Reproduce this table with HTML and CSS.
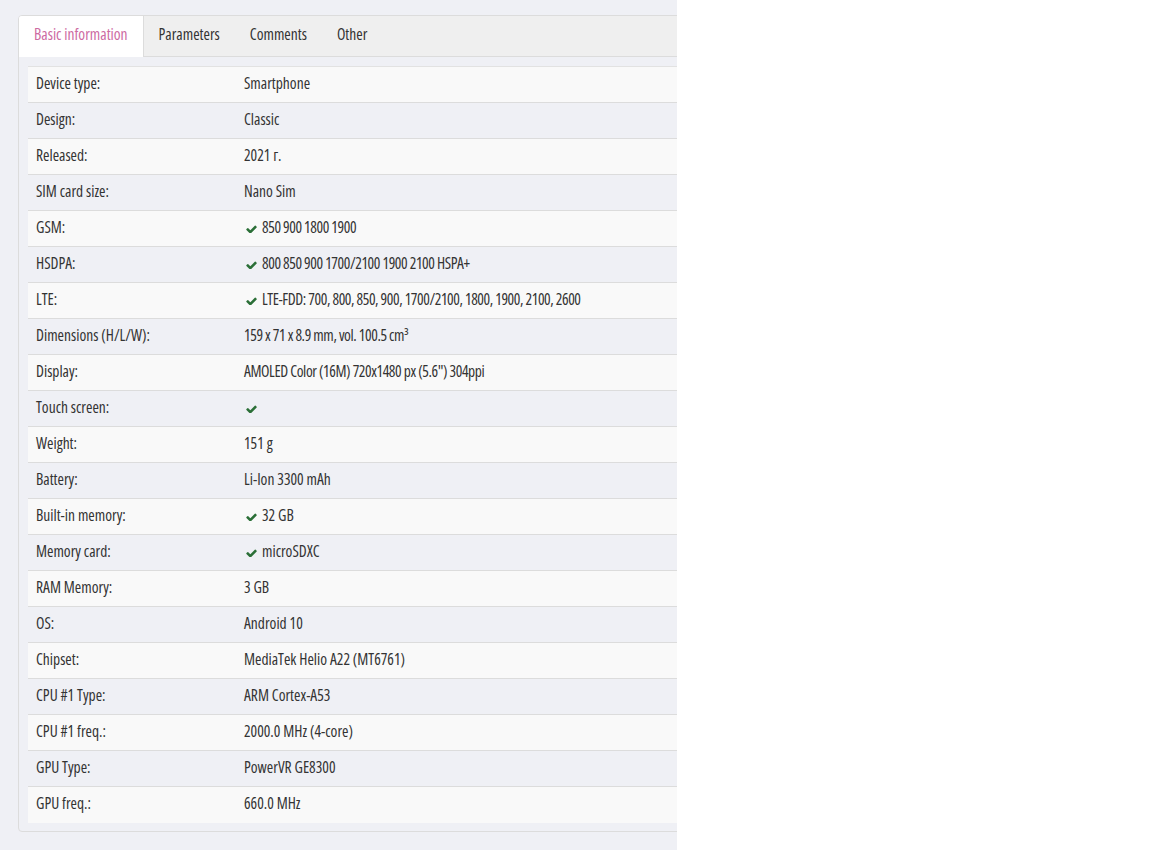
FILE: index.html
```html
<!DOCTYPE html>
<html lang="en">
<head>
    <meta charset="UTF-8">
    <title>Device specs</title>
    <link rel="stylesheet" href="styles.css">
</head>
<body>
    <div class="page">
        <div class="card">
            <div class="tabs">
                <div class="tab active">Basic information</div>
                <div class="tab">Parameters</div>
                <div class="tab">Comments</div>
                <div class="tab">Other</div>
            </div>

            <div class="tab-body">
                <table class="specs">
                    <tr><td>Device type:</td><td>Smartphone</td></tr>
                    <tr><td>Design:</td><td>Classic</td></tr>
                    <tr><td>Released:</td><td>2021 г.</td></tr>
                    <tr><td>SIM card size:</td><td>Nano Sim</td></tr>
                    <tr><td>GSM:</td><td><span class="yes"><svg viewBox="100 260 1575 1170"><path d="M1671 566q0 40-28 68l-724 724-136 136q-28 28-68 28t-68-28l-136-136-362-362q-28-28-28-68t28-68l136-136q28-28 68-28t68 28l294 295 656-657q28-28 68-28t68 28l136 136q28 28 28 68z"/></svg></span><span class="num">850 900 1800 1900</span></td></tr>
                    <tr><td>HSDPA:</td><td><span class="yes"><svg viewBox="100 260 1575 1170"><path d="M1671 566q0 40-28 68l-724 724-136 136q-28 28-68 28t-68-28l-136-136-362-362q-28-28-28-68t28-68l136-136q28-28 68-28t68 28l294 295 656-657q28-28 68-28t68 28l136 136q28 28 28 68z"/></svg></span><span class="num">800 850 900 1700/2100 1900 2100 HSPA+</span></td></tr>
                    <tr><td>LTE:</td><td><span class="yes"><svg viewBox="100 260 1575 1170"><path d="M1671 566q0 40-28 68l-724 724-136 136q-28 28-68 28t-68-28l-136-136-362-362q-28-28-28-68t28-68l136-136q28-28 68-28t68 28l294 295 656-657q28-28 68-28t68 28l136 136q28 28 28 68z"/></svg></span><span class="num">LTE-FDD: 700, 800, 850, 900, 1700/2100, 1800, 1900, 2100, 2600</span></td></tr>
                    <tr><td>Dimensions (H/L/W):</td><td><span class="num">159 x 71 x 8.9 mm, vol. 100.5 cm³</span></td></tr>
                    <tr><td>Display:</td><td><span class="num">AMOLED Color (16M) 720x1480 px (5.6") 304ppi</span></td></tr>
                    <tr><td>Touch screen:</td><td><span class="yes"><svg viewBox="100 260 1575 1170"><path d="M1671 566q0 40-28 68l-724 724-136 136q-28 28-68 28t-68-28l-136-136-362-362q-28-28-28-68t28-68l136-136q28-28 68-28t68 28l294 295 656-657q28-28 68-28t68 28l136 136q28 28 28 68z"/></svg></span></td></tr>
                    <tr><td>Weight:</td><td>151 g</td></tr>
                    <tr><td>Battery:</td><td>Li-Ion 3300 mAh</td></tr>
                    <tr><td>Built-in memory:</td><td><span class="yes"><svg viewBox="100 260 1575 1170"><path d="M1671 566q0 40-28 68l-724 724-136 136q-28 28-68 28t-68-28l-136-136-362-362q-28-28-28-68t28-68l136-136q28-28 68-28t68 28l294 295 656-657q28-28 68-28t68 28l136 136q28 28 28 68z"/></svg></span>32 GB</td></tr>
                    <tr><td>Memory card:</td><td><span class="yes"><svg viewBox="100 260 1575 1170"><path d="M1671 566q0 40-28 68l-724 724-136 136q-28 28-68 28t-68-28l-136-136-362-362q-28-28-28-68t28-68l136-136q28-28 68-28t68 28l294 295 656-657q28-28 68-28t68 28l136 136q28 28 28 68z"/></svg></span>microSDXC</td></tr>
                    <tr><td>RAM Memory:</td><td>3 GB</td></tr>
                    <tr><td>OS:</td><td>Android 10</td></tr>
                    <tr><td>Chipset:</td><td>MediaTek Helio A22 (MT6761)</td></tr>
                    <tr><td>CPU #1 Type:</td><td>ARM Cortex-A53</td></tr>
                    <tr><td>CPU #1 freq.:</td><td>2000.0 MHz (4-core)</td></tr>
                    <tr><td>GPU Type:</td><td>PowerVR GE8300</td></tr>
                    <tr><td>GPU freq.:</td><td>660.0 MHz</td></tr>
                </table>
            </div>
        </div>
    </div>
</body>
</html>
```

FILE: styles.css
```css
* {
    margin: 0;
    padding: 0;
    box-sizing: border-box;
}

body {
    background: #fff;
    font-family: "Open Sans", Roboto, sans-serif;
    font-stretch: condensed;
    font-size: 15.5px;
    color: #333;
}

.page {
    width: 677px;
    height: 850px;
    overflow: hidden;
    background: #eff0f5;
    padding: 15px 0 0 18px;
}

.card {
    width: 700px;
    border: 1px solid #dcdcdc;
    border-radius: 4px;
    background: #eff0f5;
    overflow: hidden;
}

.tabs {
    display: flex;
    background: #efefef;
    border-bottom: 1px solid #dcdcdc;
}

.tab {
    padding: 0 15px;
    height: 40px;
    line-height: 37px;
    color: #333;
}

.tab.active {
    background: #fff;
    color: #cd6aa2;
    border-right: 1px solid #dcdcdc;
    margin-bottom: -1px;
    height: 41px;
}

.tab-body {
    padding: 9px 9px 8px 9px;
}

.specs {
    width: 100%;
    border-collapse: collapse;
}

.specs td {
    height: 36px;
    padding: 0 8px 3px;
    border-top: 1px solid #dcdcdc;
    vertical-align: middle;
}

.specs td:first-child {
    width: 216px;
}

.specs td + td {
    padding-left: 0;
}

.specs tr:first-child td {
    border-top: 1px solid #e2e2e2;
}

.specs tr:nth-child(odd) td {
    background: #f9f9f9;
}

.specs tr:nth-child(even) td {
    background: #eff0f5;
}

/* long number lists run a bit narrower */
.num {
    letter-spacing: -0.4px;
}

.yes {
    display: inline-block;
    margin: 0 5px 0 2px;
}

.yes svg {
    width: 11px;
    height: 8px;
    fill: #2b6f37;
    display: block;
}
```
